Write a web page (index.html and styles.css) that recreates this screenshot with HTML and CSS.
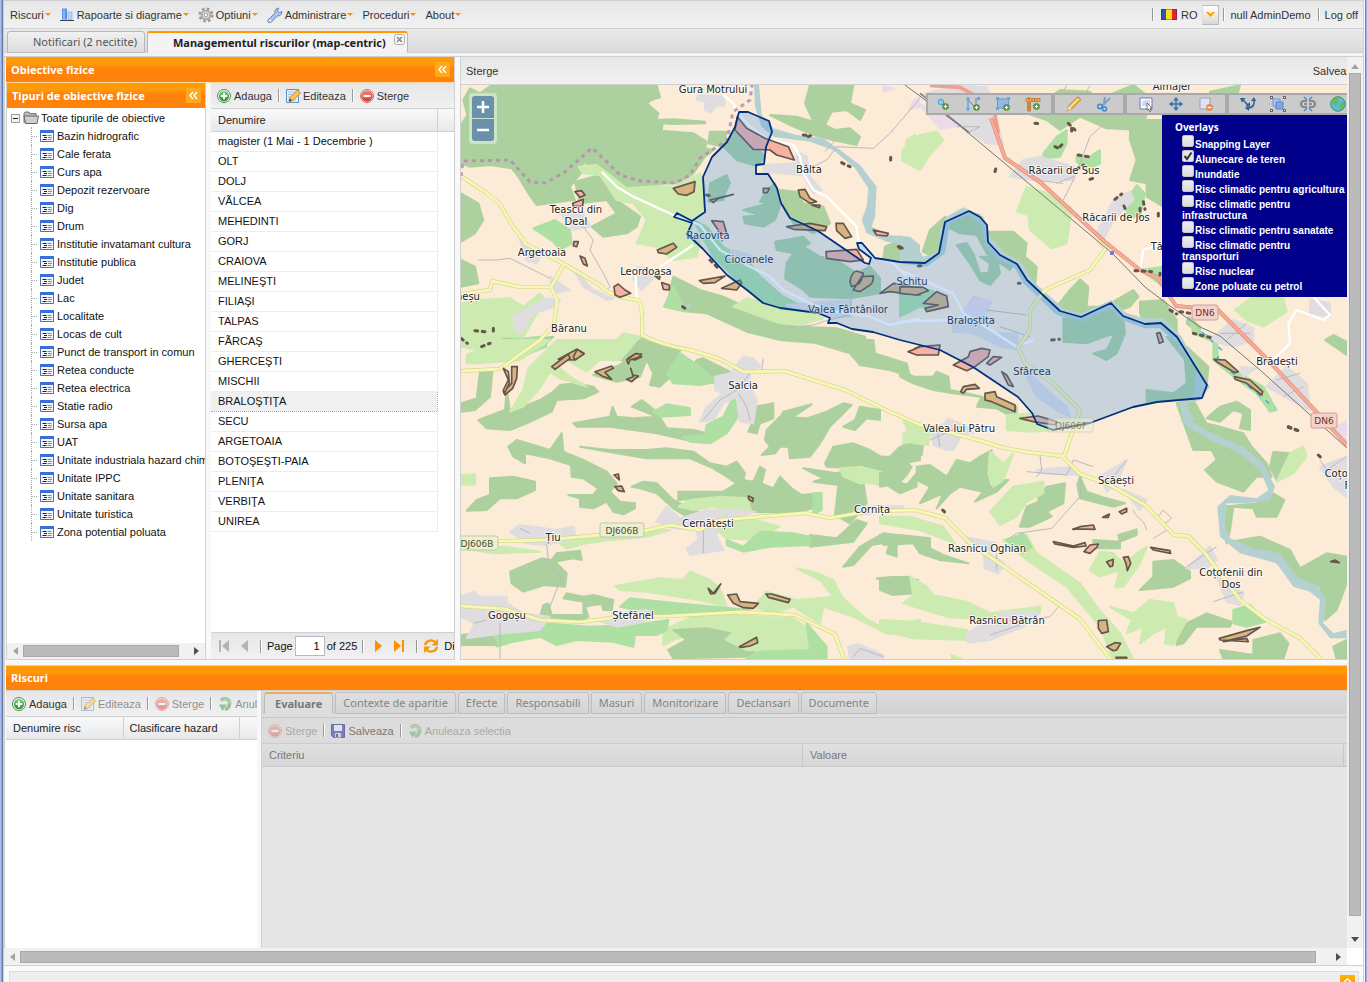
FILE: index.html
```html
<!DOCTYPE html>
<html lang="ro">
<head>
<meta charset="utf-8">
<title>Managementul riscurilor</title>
<link rel="stylesheet" href="styles.css">
</head>
<body>
<svg class="defs" aria-hidden="true">
  <defs>
    <linearGradient id="gGreen" x2="0" y2="1"><stop stop-color="#8fd08a"/><stop offset="1" stop-color="#2c8a2a"/></linearGradient>
    <linearGradient id="gRed" x2="0" y2="1"><stop stop-color="#f0857a"/><stop offset="1" stop-color="#cf3a30"/></linearGradient>
    <linearGradient id="gOr" x2="0" y2="1"><stop stop-color="#ffb400"/><stop offset="1" stop-color="#ff8a00"/></linearGradient>
    <symbol id="add" viewBox="0 0 16 16"><circle cx="8" cy="8" r="6.500" fill="#fff" stroke="#3f8f3b"/><circle cx="8" cy="8" r="5.200" fill="url(#gGreen)"/><path d="M8 4.800v6.400M4.800 8h6.400" stroke="#fff" stroke-width="2"/></symbol>
    <symbol id="del" viewBox="0 0 16 16"><circle cx="8" cy="8" r="6.500" fill="#fff" stroke="#d9685f"/><circle cx="8" cy="8" r="5.800" fill="url(#gRed)"/><path d="M4.500 8h7" stroke="#fff" stroke-width="2.200"/></symbol>
    <symbol id="edit" viewBox="0 0 16 16"><path d="M1.500 1.500h12v13h-12z" fill="#e4effc" stroke="#5f8fc6"/><path d="M3 4h7M3 6.500h5M3 9h3M3 12h8" stroke="#9fc0e6"/><path d="M4 13.500l1-4 7.500-7.500 3 3-7.500 7.500z" fill="#fbc650" stroke="#b5762a" stroke-width=".8"/><path d="M4 13.500l1-3 2 2z" fill="#44382c"/></symbol>
    <symbol id="undo" viewBox="0 0 16 16"><path d="M4 4.500c4-3.500 9-1 8.500 3.500-.4 3-2.500 5-4.500 5.500" fill="none" stroke="#3f9a4c" stroke-width="3.500"/><path d="M2 8.500h8L5.500 15z" fill="#3f9a4c"/><path d="M4.500 4.500c4-3 8-.5 8 3" fill="none" stroke="#7cc47c" stroke-width="1.500"/></symbol>
    <symbol id="save" viewBox="0 0 16 16"><path d="M1.500 1.500h13v13h-11l-2-2z" fill="#5257b5" stroke="#3c3f94"/><path d="M4 2h8v6H4z" fill="#dfe6f6"/><path d="M5 10h6v4.500H5z" fill="#c9cbd4"/><path d="M6 11h2v3H6z" fill="#44468c"/></symbol>
    <symbol id="leaf" viewBox="0 0 14 14"><path d="M.5 1.500h13v11H.5z" fill="#f4f6f9" stroke="#4f70ae"/><path d="M0 1h14v3H0z" fill="#3a6fd8"/><path d="M2.500 6.500h4M4 8.500h3M2.500 10.500h4" stroke="#222"/><path d="M7.500 6.500h4M8 8.500h4M7.500 10.500h4" stroke="#888"/></symbol>
    <symbol id="dbl" viewBox="0 0 15 15"><rect width="15" height="15" rx="1" fill="#ffa81a"/><path d="M7 4L4 7.500 7 11M11 4L8 7.500 11 11" fill="none" stroke="#fff" stroke-width="1.500"/></symbol>
    <symbol id="plusb" viewBox="0 0 8 8"><circle cx="4" cy="4" r="3.500" fill="#5a9c35" stroke="#3c7a20" stroke-width=".6"/><path d="M4 2v4M2 4h4" stroke="#fff" stroke-width="1.200"/></symbol>
  </defs>
</svg>

<div class="app">
  <nav class="topbar">
    <button class="menu">Riscuri<i class="caret"></i></button>
    <button class="menu"><svg width="15" height="15" viewBox="0 0 15 15"><path d="M2 1.500h5v11H2z" fill="#5b8fe6"/><path d="M3 2.500h2v10H3z" fill="#8db4f2"/><path d="M8 5h4v7.500H8z" fill="#b9d2f8" stroke="#7fa6e4" stroke-width=".6"/><path d="M0 13.500h14" stroke="#345"/></svg>Rapoarte si diagrame<i class="caret"></i></button>
    <button class="menu"><svg width="16" height="16" viewBox="0 0 16 16"><circle cx="8" cy="8" r="6.300" fill="none" stroke="#9a9a9a" stroke-width="2.500" stroke-dasharray="2.600 2.350"/><circle cx="8" cy="8" r="4.300" fill="#e4e4e4" stroke="#aaa" stroke-width="2"/><circle cx="8" cy="8" r="1.800" fill="#fafafa" stroke="#999"/></svg>Optiuni<i class="caret"></i></button>
    <button class="menu"><svg width="16" height="16" viewBox="0 0 16 16"><path d="M1 13l7-7c-.5-2.500.5-4.500 3.500-5l-1 3 2 1.500 2.500-1c0 3-2 4.800-4.500 4.300l-6.500 6.700c-2 1-4-.5-3-2.500z" fill="#a9c6ee" stroke="#5b7fb5" stroke-width=".9"/><circle cx="3" cy="13.500" r=".9" fill="#fff"/></svg>Administrare<i class="caret"></i></button>
    <button class="menu">Proceduri<i class="caret"></i></button>
    <button class="menu">About<i class="caret"></i></button>
    <span class="grow"></span>
    <span class="sep"></span>
    <svg class="flag" width="16" height="11" viewBox="0 0 16 11"><path d="M0 0h6v11H0z" fill="#2c52b8"/><path d="M5 0h6v11H5z" fill="#f8e017"/><path d="M11 0h5v11h-5z" fill="#e8202c"/><path d="M.5.500h15v10H.5z" fill="none" stroke="#1a2a6c" stroke-opacity=".4"/></svg>
    <span>RO</span>
    <button class="drop" aria-label="Limba"><svg width="9" height="7" viewBox="0 0 9 7"><path d="M0 1h2.500l2 2 2-2H9L4.500 6z" fill="#f90"/></svg></button>
    <span class="sep"></span>
    <a href="#" class="user">null AdminDemo</a>
    <span class="sep"></span>
    <a href="#" class="user">Log off</a>
  </nav>

  <div class="tabs" role="tablist">
    <button class="tab" role="tab">Notificari (2 necitite)</button>
    <button class="tab on" role="tab">Managementul riscurilor (map-centric)<svg class="close" width="11" height="11" viewBox="0 0 11 11"><rect x=".5" y=".5" width="10" height="10" rx="2" fill="#f6f6f6" stroke="#b0b0b0"/><path d="M3 3l5 5M8 3l-5 5" stroke="#888" stroke-width="1.500"/></svg></button>
  </div>

  <div class="scroller">
    <main class="view">
      <div class="upper">
        <section class="objects">
          <h2 class="bar main">Obiective fizice<button aria-label="Restrange"><svg width="15" height="15"><use href="#dbl"/></svg></button></h2>
          <div class="pair">
            <div class="tree">
              <h3 class="bar">Tipuri de obiective fizice<button aria-label="Restrange"><svg width="15" height="15"><use href="#dbl"/></svg></button></h3>
              <div class="treebody">
                <div class="root"><svg width="9" height="9" viewBox="0 0 9 9"><path d="M.5.5h8v8h-8z" fill="#f4f4f4" stroke="#999"/><path d="M2 4.500h5" stroke="#222"/></svg><svg width="16" height="14" viewBox="0 0 16 14"><path d="M1 12V2.500L2 1h4l1 1.500h6V5" fill="#bbb" stroke="#777"/><path d="M2.500 12.500L1 5h14.500l-1.500 7.500z" fill="#cfcfcf" stroke="#666"/></svg>Toate tipurile de obiective</div>
                <ul>
                  <li><svg width="14" height="14"><use href="#leaf"/></svg>Bazin hidrografic</li>
                  <li><svg width="14" height="14"><use href="#leaf"/></svg>Cale ferata</li>
                  <li><svg width="14" height="14"><use href="#leaf"/></svg>Curs apa</li>
                  <li><svg width="14" height="14"><use href="#leaf"/></svg>Depozit rezervoare</li>
                  <li><svg width="14" height="14"><use href="#leaf"/></svg>Dig</li>
                  <li><svg width="14" height="14"><use href="#leaf"/></svg>Drum</li>
                  <li><svg width="14" height="14"><use href="#leaf"/></svg>Institutie invatamant cultura</li>
                  <li><svg width="14" height="14"><use href="#leaf"/></svg>Institutie publica</li>
                  <li><svg width="14" height="14"><use href="#leaf"/></svg>Judet</li>
                  <li><svg width="14" height="14"><use href="#leaf"/></svg>Lac</li>
                  <li><svg width="14" height="14"><use href="#leaf"/></svg>Localitate</li>
                  <li><svg width="14" height="14"><use href="#leaf"/></svg>Locas de cult</li>
                  <li><svg width="14" height="14"><use href="#leaf"/></svg>Punct de transport in comun</li>
                  <li><svg width="14" height="14"><use href="#leaf"/></svg>Retea conducte</li>
                  <li><svg width="14" height="14"><use href="#leaf"/></svg>Retea electrica</li>
                  <li><svg width="14" height="14"><use href="#leaf"/></svg>Statie radio</li>
                  <li><svg width="14" height="14"><use href="#leaf"/></svg>Sursa apa</li>
                  <li><svg width="14" height="14"><use href="#leaf"/></svg>UAT</li>
                  <li><svg width="14" height="14"><use href="#leaf"/></svg>Unitate industriala hazard chimic</li>
                  <li><svg width="14" height="14"><use href="#leaf"/></svg>Unitate IPPC</li>
                  <li><svg width="14" height="14"><use href="#leaf"/></svg>Unitate sanitara</li>
                  <li><svg width="14" height="14"><use href="#leaf"/></svg>Unitate turistica</li>
                  <li><svg width="14" height="14"><use href="#leaf"/></svg>Zona potential poluata</li>
                </ul>
              </div>
              <div class="hscroll small"><svg width="5" height="8" viewBox="0 0 5 8"><path d="M5 0v8L0 4z" fill="#a3a3a3"/></svg><span class="thumb"></span><svg width="5" height="8" viewBox="0 0 5 8"><path d="M0 0v8l5-4z" fill="#505050"/></svg></div>
            </div>
            <div class="list">
              <div class="tools"><button><svg width="16" height="16"><use href="#add"/></svg>Adauga</button><span class="sep"></span><button><svg width="16" height="16"><use href="#edit"/></svg>Editeaza</button><span class="sep"></span><button><svg width="16" height="16"><use href="#del"/></svg>Sterge</button></div>
              <div class="gridbox">
                <table class="names">
                  <thead><tr><th>Denumire</th><th class="rest"></th></tr></thead>
                  <tbody>
                    <tr><td>magister (1 Mai - 1 Decembrie )</td></tr>
                    <tr><td>OLT</td></tr><tr><td>DOLJ</td></tr><tr><td>VÃLCEA</td></tr><tr><td>MEHEDINTI</td></tr>
                    <tr><td>GORJ</td></tr><tr><td>CRAIOVA</td></tr><tr><td>MELINEŞTI</td></tr><tr><td>FILIAŞI</td></tr>
                    <tr><td>TALPAS</td></tr><tr><td>FÃRCAŞ</td></tr><tr><td>GHERCEŞTI</td></tr><tr><td>MISCHII</td></tr>
                    <tr class="sel"><td>BRALOŞTIŢA</td></tr><tr><td>SECU</td></tr><tr><td>ARGETOAIA</td></tr>
                    <tr><td>BOTOŞEŞTI-PAIA</td></tr><tr><td>PLENIŢA</td></tr><tr><td>VERBIŢA</td></tr><tr><td>UNIREA</td></tr>
                  </tbody>
                </table>
              </div>
              <div class="pager">
                <button aria-label="Prima"><svg width="12" height="12" viewBox="0 0 12 12"><path d="M1 0h2v12H1zM11 0v12L4 6z" fill="#b4b4b4"/></svg></button>
                <button aria-label="Inapoi"><svg width="8" height="12" viewBox="0 0 8 12"><path d="M7 0v12L0 6z" fill="#b4b4b4"/></svg></button>
                <span class="sep"></span>
                <label for="page">Page</label><input id="page" value="1"><span class="of">of 225</span>
                <span class="sep"></span>
                <button aria-label="Inainte"><svg width="8" height="12" viewBox="0 0 8 12"><path d="M1 0v12l7-6z" fill="#fa9200"/></svg></button>
                <button aria-label="Ultima"><svg width="12" height="12" viewBox="0 0 12 12"><path d="M9 0h2v12H9zM1 0v12l7-6z" fill="#fa9200"/></svg></button>
                <span class="sep"></span>
                <button aria-label="Reincarca"><svg width="16" height="14" viewBox="0 0 16 14"><path d="M2 6c1-5 8-6 10.500-2.500M14 8c-1 5-8 6-10.500 2.500" fill="none" stroke="#f59a0c" stroke-width="2.400"/><path d="M15 0v6.500H8.500zM1 14V7.500h6.500z" fill="#f59a0c"/></svg></button>
                <span class="info">Displaying</span>
              </div>
            </div>
          </div>
        </section>

        <section class="mapbox">
          <div class="tools maptools"><button>Sterge</button><button class="savebtn">Salveaza</button></div>
          <div class="map">
            <svg class="canvas" viewBox="461 85 886 574" preserveAspectRatio="xMinYMin slice">
              <rect x="461" y="85" width="1000" height="700" fill="#fbebd7"/>
              <!-- woods, fields, built-up areas -->
              <g transform="translate(460 60) scale(.33333)">
                <path class="f" d="M95 75H590L600 112 575 120 560 130 595 160 590 180 640 178 735 185 735 190 640 192 608 190 605 212 700 220 740 245 735 265 760 270 735 290 700 340 660 368 600 372 560 395 510 400 470 370 430 345 370 305 362 340 330 380 345 420 300 425 230 435 205 400 175 350 155 325 90 315 30 320 3 310 3 195 22 165 10 120 30 85 60 100z"/>
                <path class="f" d="M345 365L420 345 470 420 540 470 530 500 500 520 430 530 395 500 470 460 440 420 360 430zM3 400L55 430 70 480 45 520 3 545zM3 600L45 620 55 670 3 680zM750 215L800 215 790 260 745 250z"/>
                <path class="f" d="M1050 75L1180 75 1170 130 1215 150 1200 180 1160 150 1115 155 1095 195 1125 210 1170 205 1200 230 1190 255 1120 240 1060 225 1000 200 930 165 1010 170 1060 185 1035 130z"/>
                <path class="f" d="M790 260L825 215 880 250 915 290 890 318 830 300zM750 370L800 345 810 370 795 400 790 420 745 425zM850 470L900 465 850 450 925 430 900 425 920 390 945 370 960 440 945 480 910 500 855 490zM945 545L1030 530 1050 550 1030 560 1080 590 1130 600 1190 640 1230 620 1260 655 1260 700 1170 715 1050 710 1030 690 975 655 980 610 1000 580 950 570z"/>
                <path class="f" d="M960 390L1010 395 1030 430 1090 440 1110 490 1060 520 1000 490 975 450zM1275 560L1310 545 1350 570 1350 600 1270 595zM640 650L720 690 790 710 920 770 1010 800 1130 805 1215 830 1220 880 1150 850 1080 850 960 840 860 815 740 760 690 755 620 740zM490 880L545 835 620 870 650 900 460 900zM135 830L210 840 280 830 250 860 120 880 70 870z"/>
                <path class="l" d="M355 320L410 315 450 345 500 385 600 378 640 380 720 340 735 380 735 450 700 480 690 520 720 545 710 590 640 600 590 560 530 550 560 480 520 430 470 420 420 345 370 340zM1340 240L1365 225 1380 235V330L1330 300zM3 730L60 720 150 715 190 740 240 700 255 720 190 830 130 830 60 870 3 860zM820 740L860 715 960 735 1050 755 1090 775 1020 795 960 790zM400 900L470 840 490 820 540 830 480 900z"/>
                <path class="o" d="M220 505L285 480 330 510 335 550 300 570 280 545zM700 480L740 500 790 560 870 610 900 650 970 710 1030 740 960 740 900 720 830 660 760 590zM150 840L240 830 260 860 160 900 130 880zM640 680L680 755 612 740z"/>
                <path class="r" d="M715 105L790 110 795 135 765 140 755 157 735 150 735 125 710 120zM910 315L1010 310 1010 275 1040 290 1050 350 1085 390 1060 400 1030 345 910 335zM525 620L560 625 580 655 545 690 520 660zM160 770L260 715 300 720 285 740 220 760 185 820 165 810zM270 650L330 690 280 700zM300 460L370 460 390 500 340 510zM820 570L880 590 870 610 800 590zM180 540L245 580 230 610 200 600zM980 735L1170 720 1175 770 1100 770zM335 620L400 690 460 715 440 720 370 680z"/>
                <path class="m" d="M1265 75L1310 85 1270 100zM1365 115L1380 110V145L1345 150 1355 125z"/>
                <path class="w" d="M882 75H897L902 130 905 165 940 205 1010 225 1090 235 1140 270 1200 315 1250 380 1245 470 1235 500 1290 525 1350 530 1380 555V605L1350 595 1345 555 1280 545 1220 520 1205 480 1220 440 1225 385 1185 325 1120 270 1050 245 940 230 905 200 885 140z"/>
                <path class="w" d="M675 735L690 730 690 742 675 745z"/>
              </g>
              <g transform="translate(460 340) scale(.33333)">
                <path class="f" d="M400 105L480 75 530 30 570 5 660 30 650 75 680 100 710 60 730 55 820 100 780 130 720 125 690 85 620 120 600 140 570 135 580 100 560 60 540 110 470 125zM55 240L135 210 140 150 150 215 240 180 280 155 300 135 350 130 400 140 415 155 370 175 290 180 275 215 200 250 150 270 80 265zM60 95L97 95 90 170 45 210 3 215V190L50 175zM340 250L450 230 458 200 470 230 520 235 590 230 515 200 545 180 590 215 620 265 700 270 740 280 680 300 590 280 450 260 350 260z"/>
                <path class="f" d="M145 320L170 300 270 330 305 280 310 335 370 360 440 395 470 430 450 455 480 485 525 490 525 505 490 523 460 515 440 485 400 505 360 500 360 475 325 465 400 465 415 445 370 415 335 410 333 375 270 355 195 340 195 370 160 350zM90 415L160 410 225 425 225 450 170 475 120 475 80 510 20 512 50 480 90 465zM360 320L450 330 560 330 620 325 700 335 750 370 800 380 830 365 855 400 850 420 880 425 900 380 915 390 905 430 940 445 960 410 995 445 1025 465 1080 460 1075 500 1000 520 875 515 870 475 780 470 655 480 655 455 790 455 830 430 800 410 760 385 690 355 560 355 470 340z"/>
                <path class="f" d="M515 440L550 425 590 430 640 480 700 510 735 525 680 530 640 505 590 460 540 445zM1060 0H1240L1245 40 1340 70 1350 110 1290 90 1200 75 1170 40 1070 10zM885 200L940 190 940 235 900 250 890 280 865 275 880 240zM920 270L960 230 1040 235 1100 215 1150 190 1175 195 1110 260 1080 310 1050 350 990 355 985 320 960 320 945 340 905 345 930 320 915 300zM955 240L970 215 1055 193 1000 230zM1150 260L1185 240 1200 200 1260 210 1260 240 1220 235 1185 270zM1095 370L1120 320 1180 310 1230 330 1280 360 1320 320 1380 310V360L1310 375 1280 410 1340 435 1370 400V440L1320 460 1280 435 1210 425 1220 490 1170 550 1125 525 1135 435 1060 425 1090 415 1030 385 1130 400 1180 385 1100 380z"/>
                <path class="f" d="M150 695L245 655 275 660 290 640 360 632 365 660 340 655 285 665 320 700 315 740 250 735 240 740 190 755 155 730zM240 830L250 795 265 790 275 825 370 825 370 785 310 775 320 760 370 770 400 765 460 780 455 810 430 810 425 792 400 795 375 800 385 830 370 840zM640 870L740 865 810 880 800 905 850 920 910 920 860 950 640 955 625 930 680 900zM1150 680L1200 620 1270 580 1350 590 1375 600 1310 605 1310 650 1280 640 1290 605 1235 615 1180 675zM1250 715L1310 710 1375 720 1350 760 1265 750 1280 730zM1050 585L1130 595 1190 540 1220 550 1180 605 1050 620z"/>
                <path class="l" d="M20 45L120 0H270L180 60 60 70 20 70zM205 85L290 0 480 0 440 40 380 95 320 60 290 75 330 110 380 140 300 115 270 95 235 150 190 200 150 215 190 150zM655 500L690 480 780 470 860 475 875 515 810 520 760 500 700 510zM750 545L870 535 960 560 920 580 890 600 800 595 770 570zM3 405L45 403V433L3 435zM1330 280L1380 265V310L1330 310zM1140 385L1200 380 1280 400 1280 430 1200 430 1150 410zM300 610L420 580 630 570 560 590 450 600 380 610 320 625zM3 625L130 620 240 635 100 640zM465 738L600 715 670 720 690 695 750 720 780 745 800 800 720 780 560 755 480 750zM880 800L920 755 1010 780 1120 770 1080 720 1010 685 1060 695 1120 720 1145 770 1210 830 1260 860 1380 840V890L1280 880 1180 830 1090 800 1080 850 1000 800 940 820zM610 870L720 820 1000 835 1050 870 1090 940 860 930 800 900 740 870 640 900 610 915z"/>
                <path class="o" d="M580 215L620 193 690 205 690 225 600 230zM620 100L660 40 720 80 770 125 720 135 640 130zM670 290L735 285 740 255 790 230 820 170 840 170 840 220 800 280 750 310 690 305zM800 600L850 620 900 575 1000 580 1050 590 1050 615 930 620 850 635 800 615zM1060 460L1085 460 1085 510 1060 525zM480 800L510 775 650 790 870 810 800 820 600 825zM100 870L180 880 250 850 390 860 520 855 625 840 620 870 590 885 525 885 520 920 460 905 350 900 290 915 240 890 160 905 110 920zM1040 850L1100 920 1100 955 860 955 900 935 1050 930z"/>
                <path class="f" d="M640 870L740 865 810 880 780 905 730 925 640 955 625 930 680 900zM3 885L90 875 110 915 3 915z"/>
                <path class="r" d="M765 110L810 100 850 50 880 55 900 80 870 95 870 140 890 180 880 250 840 245 835 210 830 170 790 190 760 240 720 245 740 200 790 160 765 150zM150 575L180 555 290 570 340 560 350 595 260 615 200 610zM590 545L620 500 660 535 740 510 885 515 770 545 770 590 790 630 690 645 680 625 715 600 710 570 640 565zM1190 500L1330 498 1330 508 1200 525zM3 770L40 755 60 770 140 770 140 790 190 820 270 830 240 870 130 880 20 895 45 850 3 830zM410 840L510 815 560 810 590 830 530 850 470 860zM1165 920L1195 912 1270 945 1270 957 1170 957z"/>
              </g>
              <g transform="translate(900 120) scale(.33333)">
                <path class="f" d="M690 0H790V260L740 230 740 190 690 180 710 120 690 60zM68 395L90 330 135 290 130 400 90 405zM265 335L340 335 380 370 375 410 410 440 405 510 350 440 300 400 265 370zM470 560L510 510 540 478 565 500 560 560 600 560 640 545 700 510 715 530 690 560 660 570 700 600 640 575 545 595 480 575zM720 545L790 540 830 600 830 640 780 610 735 611 720 580zM865 590L900 620 900 640 860 610zM860 680L925 740 920 800 880 760zM205 275L180 300 240 285zM920 895L960 860 1010 845 1050 870 1050 930 1020 925 1030 880 1000 870 960 905zM1275 660L1300 645 1340 665V705z"/>
                <path class="f" d="M0 745L40 770 100 770 110 755 145 770 150 810 200 820 245 830 230 860 290 865 350 900 350 860 240 830 160 820 100 810 40 790 0 770zM140 305L200 275 240 295 260 370 340 435 330 450 260 400 230 345 180 340 150 325z"/>
                <path class="f" d="M170 375L200 370 220 400 240 460 265 460 270 430 240 410 290 410 300 460 270 495 240 480 210 430zM490 595L545 600 640 560 670 600 675 640 650 700 620 720 580 700 620 690 645 640 600 655 560 670 490 665zM740 810L820 820 860 790 855 720 800 650 830 660 885 745 880 830 740 845zM830 850L880 840 930 930 970 990 880 990z"/>
                <path class="l" d="M8 90L60 45 110 35 130 60 85 110 60 150 5 120zM380 200L430 215 515 265 500 370 455 385 390 330 385 285 350 275zM1005 570L1060 530 1150 535 1160 575 1090 620 1040 600zM320 885L400 880 420 910 470 930 390 935 320 930z"/>
                <path class="o" d="M430 100L470 50 500 30 500 70 480 110 430 115zM530 105L570 110 600 90 600 130 560 150 530 125zM680 240L710 195 735 220 720 290 680 290zM720 450L790 440 790 500 750 470zM0 520L60 500 130 525 140 560 60 560 0 590zM870 600L900 640 950 655 955 720 1000 750 1090 800 1130 870 1110 875 1070 820 1000 770 940 720 940 665 880 640z"/>
                <path class="r" d="M155 0H290L310 75 260 70zM330 170L370 120 420 110 520 140 520 180 400 180zM590 340L640 240 690 215 700 240 640 300 610 360zM190 580L220 530 275 545 240 600zM155 600L210 590 280 640 350 640 360 690 300 680 220 640 160 635zM380 770L400 770 430 800 500 860 510 890 470 870 410 830zM930 660L1000 600 1060 625 1060 660 1000 680zM1100 800L1160 740 1220 790 1230 870 1190 850zM1230 540L1290 550 1290 590 1230 580zM1020 740L1070 745 1030 770zM115 930L145 895 200 920 220 940 160 940 150 990 120 970z"/>
                <path class="m" d="M1300 930L1340 905V960zM190 565L235 530 270 540 265 580 215 605z"/>
                <path class="w" d="M0 345L40 365 70 410 120 395 120 330 140 290 190 262 250 290 270 350 310 395 365 425 395 480 490 565 545 580 635 540 680 580 735 595 790 595 845 650 915 780 930 800 900 840 860 850 870 880 900 920 970 945 1020 990H970L900 950 850 910 840 850 880 830 890 750 830 670 780 625 735 625 665 600 630 565 545 605 470 585 370 490 345 445 290 415 255 375 245 315 205 285 150 310 135 400 80 440 0 430z"/>
                <path d="M905 635l60 55 -15 30 55 45 120 100" fill="none" stroke="#3aa5ea" stroke-width="4" stroke-dasharray="14 20"/>
              </g>
              <g transform="translate(880 420) scale(.33333)">
                <path class="f" d="M70 75L130 70 125 105 60 105zM0 110L60 110 95 140 80 165 55 190 0 200V160L40 150zM110 140L150 135 200 170 230 120 270 130 300 110 335 90 320 160 330 200 370 180 385 180 350 215 285 245 310 215 240 200 210 220 170 265 190 220 120 250 150 200 110 180zM475 235L500 200 555 190 550 250 480 285zM420 320L440 260 475 245 515 290 450 320zM600 170L620 215 680 235 735 250 700 260 600 235 592 195z"/>
                <path class="f" d="M930 0L1000 15 1090 40 1115 80 1160 130 1175 170 1130 170 1090 215 1010 185 975 150 1010 120 980 60 940 40zM1180 95L1230 100 1230 140 1190 180 1170 140zM1130 250L1180 220 1213 240 1190 290 1130 290 1120 265 1060 260 1050 330 1040 370 1025 320 1030 260zM1050 365L1140 350 1230 390 1260 445 1340 400 1400 410V490L1370 570 1335 600 1320 500 1240 470 1180 420 1090 395z"/>
                <path class="f" d="M820 425L880 420 930 455 930 475 880 500 780 510 820 470zM715 345L770 328 770 345 720 365zM640 360L720 365 720 385 640 385zM900 620L980 580 1055 605 1050 620 950 620 910 670 890 675zM1120 660L1200 640 1225 670 1210 717H1030L1020 690 1120 705zM0 345L60 345 150 355 150 385 190 405 265 430 180 420 120 400 100 370 10 375zM0 475L90 470 100 520 40 525 0 510zM1360 680L1400 660V717H1370z"/>
                <path class="l" d="M70 0L150 20 145 75 100 70zM325 160L330 95 370 130 400 100 370 180 340 200zM330 275L400 200 490 185 490 220 440 245 410 290 360 315zM0 290L90 290 190 320 225 370 120 330 0 310zM1190 185L1230 100 1270 80 1280 110 1240 160zM370 360L440 345 470 400 600 490 650 560 720 640 760 717H700L660 620 560 500 440 420zM630 450L660 395 700 400 730 430 800 380 780 430 730 500 705 500 720 450 660 470zM90 470L140 500 160 525 260 545 330 580 480 560 480 575 330 600 200 590 70 550 100 525zM0 600L100 605 260 630 270 660 100 655 0 630zM690 560L760 580 810 540 880 550 890 590 920 600 880 675 855 670 860 620 820 640 780 670 790 620 740 640 755 600zM215 705L245 717H215z"/>
                <path class="o" d="M380 360L430 340 455 380 430 400zM1060 570L1110 555 1155 605 1100 620 1060 610z"/>
                <path class="r" d="M150 20L230 10 250 35 220 90 200 90 160 75zM470 150L580 140 600 165 480 160zM660 170L740 120 710 190 680 215zM310 390L375 430 355 460 315 445zM250 350L350 370 330 390 260 370zM920 445L990 380 1010 420 980 445zM1010 470L1090 520 1080 555 1040 545zM260 640L380 575 480 580 430 620 330 660 265 668zM730 210L800 240 780 270zM1320 140L1400 110V230L1360 200z"/>
                <path class="m" d="M1365 20L1400 0V75z"/>
                <path class="w" d="M900 0L930 0 985 35 1020 50 1090 80 1150 130 1185 200 1170 240 1100 250 1040 250 1035 320 1050 355 1120 385 1200 400 1250 470 1310 495 1340 540 1330 610 1360 640 1400 630V655L1350 655 1315 610 1320 540 1290 515 1240 500 1190 430 1080 400 1020 350 1012 260 1050 225 1130 235 1165 210 1140 150 1080 100 1000 65 940 30z"/>
              </g>
              <g transform="translate(920 0) scale(.33333)">
                <path class="f" d="M320 340L420 270 510 275 530 300 640 255 700 300 660 390 560 385 480 350 420 390 380 360zM870 275L960 256 950 290 870 290z"/>
                <path class="r" d="M0 285L110 256 200 262 230 330 220 390 80 360z"/>
                <path class="m" d="M0 310L60 330 120 380 60 390 0 320z"/>
                <path d="M30 256L120 262 190 300 225 345 235 400" fill="none" stroke="#f0a08c" stroke-width="11"/>
                <path class="rail" d="M0 280L150 400"/>
                <path class="g" d="M470 330L510 256M390 330L440 256"/>
              </g>

              <!-- minor roads -->
              <g transform="translate(460 60) scale(.33333)">
                <path class="g" d="M55 600H110L150 595 180 610 270 655M370 500L400 540 390 570 430 640 450 680 440 690M1380 115L1290 220 1240 265 1130 260 1100 300 1050 325M1125 240L1095 275M980 803L1060 795 1105 780 1170 765 1175 690 1230 610"/>
                <path class="wh" d="M790 105L820 130 830 155 870 200 920 235 1000 255 1020 290 1030 340 1060 390 1100 410 1190 500 1197 560 1240 590 1300 610 1340 650M425 335L470 380 520 410 640 465 720 495 780 570 860 615 930 650 970 690 1040 725 1100 750 1230 770 1290 795 1380 775M525 620L530 720M600 620L700 555"/>
              </g>
              <g transform="translate(460 340) scale(.33333)">
                <path class="g" d="M260 610L265 660 280 690 305 710 270 800 270 830M120 850V957M730 570V640M180 565L210 580M730 240L780 180 830 150 870 100M910 55L905 90M835 160L860 200 870 240M40 850L80 840M1180 950L1200 925 1270 950"/>
              </g>
              <g transform="translate(900 120) scale(.33333)">
                <path class="g" d="M625 0L570 50 555 90 520 180 490 240M170 20L240 20 200 40M470 190L520 170M260 570L380 585M300 620L390 650M400 180L490 190M960 640L1050 640M980 660L1040 610M1130 780L1200 760M1150 830L1210 800"/>
                <path class="wh" d="M0 450L90 490 160 520 190 580 280 635 350 680 400 660M0 605L150 600 200 590M1240 530L1290 585 1270 600 1190 570 1165 610 1170 670 1120 720M720 450L730 390 790 370"/>
              </g>
              <g transform="translate(880 420) scale(.33333)">
                <path class="g" d="M440 155L560 165 580 120 640 140M480 105L485 150 470 170M605 170L600 230 515 325 410 340 380 360M680 195L740 120M820 355L870 325M830 295L850 270 875 295 855 310M1010 380L920 440M1000 545L1090 515M350 400V450M150 60L240 20M180 80L170 20M540 555L510 590 440 600M330 645L420 615M760 270C770 300 790 290 800 330M1320 120L1340 150 1400 110"/>
              </g>

              <!-- county and national roads -->
              <defs>
                <path id="dj" d="M461 176L485 192 500 204 512 225 526 244 564 264 600 285 Q608 296 638 300 Q643 304 642 335 Q660 345 690 350L720 359 744 372 784 371 845 390 886 410 918 424 955 434 Q980 440 1000 447L1026 452 1062 456 1080 474 1110 485 1145 505 1174 535 1188 536 1205 553 1240 600 1265 619 1300 638 1321 659M564 264L551 287 557 300 554 325 540 340 500 369 461 371M461 294L490 290 492 281 520 287 551 287M461 541L510 541 545 540 600 535 640 532 670 525 700 530 720 520 805 513 830 518 870 511 915 510 945 518 970 543 1080 619 1110 659M461 606L505 609 540 620 580 622 620 617 670 616 740 612 795 615 805 620 835 634 844 659M1064 456L1080 410 1055 385 1025 363 1018 348 1030 330 1030 310 1045 290 1090 270 1106 248 1098 240"/>
                <path id="dn" d="M991 118L1005 158 1040 182 1105 242 1140 270 1158 278 1176 306 1218 310 1270 362 1347 445"/>
              </defs>
              <g class="road"><use href="#dj" class="c1"/><use href="#dj" class="c2"/><use href="#dn" class="p1"/><use href="#dn" class="p2"/></g>
              <path class="rail" d="M905 85L960 126 1112 253 1145 287 1170 306 1200 327 1220 336 1260 370 1347 448"/>
              <path d="M1110 251h4v4h-4z" fill="#7481c8"/>
              <path d="M461 176L463 161 510 160 530 182 545 183 565 172 592 148 605 160 620 175 640 181 675 183 690 175 700 158 727 140 733 112 750 100 752 85" fill="none" stroke="#b98caf" stroke-opacity=".85" stroke-width="3" stroke-dasharray="4 4"/>

              <!-- landslide areas -->
              <g class="slide" transform="translate(460 60) scale(.33333)">
                <path class="pk" d="M832 170L860 205 915 235 985 260 1003 300 950 285 930 270 880 268 825 210zM345 395L365 392 375 405 360 412zM338 430L370 418 368 438 340 440zM342 545L355 545 350 560 340 558zM360 588L375 595 382 618 370 612zM462 680L475 672 495 690 512 700 480 712 465 705zM585 648H600L598 658zM605 668L628 675 628 690 610 688zM755 482L790 485 800 520 785 525zM910 385L928 385 922 398 910 398zM1098 575L1190 568 1210 600 1170 605 1100 595zM1240 510L1285 520 1280 528 1250 525zM1350 875L1380 858V880zM1365 865L1380 862"/>
                <path class="tn" d="M640 385L705 365 702 395 680 406 655 402zM1015 390L1035 388 1050 415 1070 425 1050 430 1020 410zM1055 435L1080 435 1078 443zM980 500L1050 490 1100 500 1095 512 1000 508zM1128 490L1150 490 1175 530 1155 535 1130 512zM592 570L640 550 650 562 620 582 595 578zM718 662L795 648 765 668 730 670zM785 685L840 660 845 670 830 690zM1170 665Q1175 635 1190 633L1210 640Q1205 665 1195 672L1175 680zM1180 690L1205 650 1240 648Q1240 670 1230 675L1200 695zM1260 700L1300 670 1340 675 1380 690V705L1330 700 1290 695zM295 898L350 868 372 880 340 900zM505 895L530 880 545 890 525 900zM750 420L820 403 775 415 760 428z"/>
                <path class="dk" d="M1030 225L1052 227 1040 232M1145 308L1170 320M1292 292V305M1315 560L1332 572M45 812L75 815M3 835L22 850M65 860L90 850M750 600L775 625M740 405L760 410M668 740L675 745M100 805V818"/>
              </g>
              <g class="slide" transform="translate(460 340) scale(.33333)">
                <path class="tn" d="M275 80L325 42 330 55 285 88zM340 50L352 28 372 42 345 60zM405 95L455 78 460 85 435 97 455 118 430 110zM500 60L525 42 545 42 535 52 510 60 505 72zM512 85L518 105 535 108 515 125 500 118 520 110zM155 80L172 80 170 115 158 145 135 165 130 155 155 130zM462 405L475 402 478 420zM465 440L485 438 493 455 475 452zM865 468L880 475 878 485 866 478zM745 745L760 760 782 732 765 760 752 762zM803 765L830 762 840 785 895 790 880 805 850 803 820 790zM918 762L935 762 990 778 985 788 925 772zM838 920L890 892 893 908 870 918 842 922z"/>
                <path class="pk" d="M130 85L145 95 148 130 133 160 130 150 145 120zM1345 35L1378 25V45z"/>
              </g>
              <g class="slide" transform="translate(900 120) scale(.33333)">
                <path class="pk" d="M25 695L60 680 120 675 115 705 50 705zM160 735L205 710 210 695 245 685 270 690 265 710 225 740 200 752zM260 730L280 710 305 712 270 735zM305 755L320 765 340 800 325 795zM360 895L415 888 470 905 465 915 400 905zM770 640L780 638 790 665 778 670z"/>
                <path class="tn" d="M182 815L190 800 225 793 238 805 200 808 190 820zM255 820L285 815 290 830 345 855 345 875 275 845 255 840zM70 550L110 515 140 528 145 560 80 575 75 565 115 555zM0 500L70 502 85 512 50 525 0 520zM942 718L975 720 1015 755 1005 758 950 725zM1003 770L1050 780 1088 815 1085 825 1040 790 1005 778z"/>
                <path class="dk" d="M285 155L290 135M505 10L525 30M480 80L490 70M515 25V45M465 80L475 85M530 148L550 135M535 105L565 110M570 178L588 172M645 238L665 222M672 258L675 265M730 245L735 268M720 265V290M775 280V298M455 660L478 658M55 438L70 437M0 380L15 390M810 570L830 582M840 575L870 580M880 640L940 655M705 452L755 455M780 460V465M405 10L425 12M1165 922L1200 934M355 490H360"/>
              </g>
              <g class="slide" transform="translate(880 420) scale(.33333)">
                <path class="pk" d="M718 275L740 265 740 275 725 282zM668 292L688 282 685 292zM578 328L600 320 640 315 645 328 600 327zM520 365L580 378 615 368 618 378 580 382 525 372zM612 395L630 375 655 372 650 382 630 400zM812 382L870 392 872 400 820 390z"/>
                <path class="tn" d="M680 425L700 418 698 438 690 440zM730 412L745 410 752 430 742 452 738 430zM655 602L680 600 685 635 665 640 655 625zM680 680L705 668 722 670 710 690 700 692zM708 712L740 712 740 718H710zM1018 655L1100 632 1140 622 1100 648 1030 665 1100 655 1105 665 1020 660zM1352 425L1365 420 1378 428z"/>
                <path class="dk" d="M188 270L200 282M1225 20L1260 34M1315 105L1322 112"/>
              </g>

              <path d="M739 112L748 112 769 121 772 132 766 147 764 164 756 165 756 174 768 174 777 188 781 203 790 218 818 231 865 263 869 264 871 258 859 249 857 243 862 243 875 258 900 262 925 263 939 253 945 222 969 211 980 217 987 225 988 242 1000 255 1017 264 1027 280 1060 311 1081 317 1111 303 1123 316 1145 324 1161 323 1177 337 1207 385 1202 398 1157 402 1133 407 1090 423 1053 430 1037 424 1032 413 1018 397 973 367 940 350 900 340 873 332 852 329 837 323 828 323 830 318 818 313 780 308 763 303 747 290 727 275 703 249 687 234 692 223 674 217 677 213 692 221 705 212 703 177 712 157 727 142 735 127z" fill="#328ceb" fill-opacity=".25" stroke="#00307f" stroke-width="1.800" stroke-linejoin="round"/>

              <g class="shield">
                <rect x="455" y="536" width="43" height="14" rx="2"/><text x="477" y="547">DJ606B</text>
                <rect x="600" y="523" width="44" height="14" rx="2"/><text x="622" y="534">DJ606B</text>
                <rect x="1048" y="418" width="45" height="14" rx="2" opacity=".5"/><text x="1071" y="429" opacity=".6">DJ606F</text>
                <rect class="dn" x="1192" y="305" width="26" height="15" rx="2"/><text class="dn" x="1205" y="316">DN6</text>
                <rect class="dn" x="1311" y="413" width="26" height="15" rx="2"/><text class="dn" x="1324" y="424">DN6</text>
              </g>
              <g class="place">
                <text x="713" y="93">Gura Motrului</text><text x="1172" y="90">Almajer</text><text x="809" y="173">Bâlta</text>
                <text x="576" y="213">Teascu din</text><text x="576" y="225">Deal</text><text x="542" y="256">Argetoaia</text>
                <text x="646" y="275">Leordoasa</text><text x="458" y="300">Argineșu</text><text x="569" y="332">Băranu</text>
                <text x="1064" y="174">Răcarii de Sus</text><text x="1116" y="221">Răcarii de Jos</text><text x="1167" y="250">Tălpaș</text>
                <text x="743" y="389">Salcia</text><text x="959" y="432">Valea lui Pătru</text><text x="1277" y="365">Brădești</text>
                <text x="708" y="527">Cernătești</text><text x="872" y="513">Cornița</text><text x="553" y="541">Țiu</text>
                <text x="507" y="619">Gogoșu</text><text x="633" y="619">Ștefănel</text><text x="1116" y="484">Scăești</text>
                <text x="987" y="552">Rasnicu Oghian</text><text x="1007" y="624">Rasnicu Bătrân</text>
                <text x="1231" y="576">Coțofenii din</text><text x="1231" y="588">Dos</text>
                <text x="1347" y="477">Coțofenii</text><text x="1355" y="489">Față</text>
                <g class="in"><text x="708" y="239">Racovița</text><text x="749" y="263">Ciocanele</text><text x="912" y="285">Schitu</text><text x="848" y="313">Valea Fântânilor</text><text x="971" y="324">Braloștița</text><text x="1032" y="375">Sfârcea</text></g>
              </g>
            </svg>

            <div class="zoom"><button aria-label="Mareste"><svg width="14" height="14" viewBox="0 0 14 14"><path d="M7 1v12M1 7h12" stroke="#fff" stroke-width="2.500"/></svg></button><button aria-label="Micsoreaza"><svg width="14" height="14" viewBox="0 0 14 14"><path d="M1 7h12" stroke="#fff" stroke-width="2.500"/></svg></button></div>

            <div class="draw">
              <div class="set first">
                <button aria-label="Punct"><svg viewBox="0 0 16 16"><circle cx="6" cy="6" r="2.800" fill="#8ec9ea" stroke="#4d9bd0"/><use href="#plusb" x="7" y="7" width="7" height="7"/></svg></button>
                <button aria-label="Linie"><svg viewBox="0 0 16 16"><path d="M3 13V4l8 8V2" fill="none" stroke="#6682b8"/><path d="M1.500 1.500h3v3h-3zM1.500 11.500h3v3h-3zM12 1h3v3h-3z" fill="#45b6ea"/><use href="#plusb" x="8" y="8" width="7" height="7"/></svg></button>
                <button aria-label="Poligon"><svg viewBox="0 0 16 16"><path d="M2.500 3h11v9h-11z" fill="#92b9ea" stroke="#6a94d0"/><path d="M1 1h3v3H1zM12 1h3v3h-3zM1 11h3v3H1z" fill="#45b6ea"/><use href="#plusb" x="8" y="8" width="7" height="7"/></svg></button>
                <button aria-label="Masurare"><svg viewBox="0 0 16 16"><path d="M1 2.500h14v3H5.500V15h-3V5.500H1z" fill="#f1b064" stroke="#c5803a"/><path d="M4 1v14M7 3v2M9.500 3v2M12 3v2M3 8h2M3 11h2" stroke="#a8662a" stroke-width=".8"/><use href="#plusb" x="8" y="7" width="7" height="7"/></svg></button>
              </div>
              <div class="set">
                <button aria-label="Editeaza"><svg viewBox="0 0 16 16"><path d="M1 15l1.500-5L11 1.500q1-1 2.500.5t.5 2.500L5.500 13z" fill="#fbc74a" stroke="#b9762a"/><path d="M1 15l1.500-5 3 3z" fill="#f3dfc0"/><path d="M4 11l8-8" stroke="#fff0b0"/></svg></button>
                <button aria-label="Taie"><svg viewBox="0 0 16 16"><path d="M9 1L7.500 10M14 2L6 10" stroke="#7d9ec8" stroke-width="2"/><circle cx="4" cy="10.500" r="2.200" fill="none" stroke="#4187c8" stroke-width="1.500"/><circle cx="8.500" cy="13" r="2" fill="none" stroke="#4187c8" stroke-width="1.500"/></svg></button>
              </div>
              <div class="set">
                <button aria-label="Selecteaza"><svg viewBox="0 0 16 16"><path d="M2 2h12v11H2z" fill="#f8fafe" stroke="#6a7fae"/><path d="M4 10V8q0-4 4-4h4v6z" fill="#cdd8ef"/><path d="M9 7l5 5-2 .3 1 2.700-1.500.5-1-2.500L9 14z" fill="#fff" stroke="#555" stroke-width=".8"/></svg></button>
                <button aria-label="Muta"><svg viewBox="0 0 16 16"><path d="M8 3v10M3 8h10" stroke="#366fa8" stroke-width="1.500"/><path d="M8 1l3 3.500H5zM8 15l3-3.500H5zM1 8l3.500-3v6zM15 8l-3.500-3v6z" fill="#366fa8"/></svg></button>
                <button aria-label="Sterge"><svg viewBox="0 0 16 16"><path d="M2 2h10v11H2z" fill="#dde3ef" stroke="#98a2bd"/><circle cx="11.500" cy="11.500" r="3.500" fill="#e08b5e"/><path d="M9.500 11.500h4" stroke="#fff" stroke-width="1.400"/></svg></button>
              </div>
              <div class="set">
                <button aria-label="Roteste"><svg viewBox="0 0 16 16"><path d="M3 4l6 6M14 4q1 7-5 8" fill="none" stroke="#315f9e" stroke-width="1.600"/><path d="M0 2h5.500L2 6.500zM14 1l2 4h-5zM9 9v6l-4-3zM10 11V6L5.500 10z" fill="#315f9e"/></svg></button>
                <button aria-label="Redimensioneaza"><svg viewBox="0 0 16 16"><path d="M3 3h7v7H3z" fill="#a9c8f2" stroke="#6a96d6"/><path d="M6 6h7v7H6z" fill="#7da9e6" stroke="#5686cc"/><path d="M.5.5h2v2h-2zM13.500.5h2v2h-2zM.5 13.500h2v2h-2zM13.500 13.500h2v2h-2z" fill="#fff" stroke="#333" stroke-width=".8"/></svg></button>
                <button aria-label="Separa"><svg viewBox="0 0 16 16"><path d="M7 5H4Q1 5 1 8t3 3h3M9 5h3q3 0 3 3t-3 3H9M4 8h3M9 8h3" fill="none" stroke="#777" stroke-width="1.600"/><path d="M4 1l3 3M12 1L9 4M4 15l3-3M12 15l-3-3" stroke="#4386cf" stroke-width="1.300"/></svg></button>
                <button aria-label="Harta"><svg viewBox="0 0 16 16"><circle cx="8" cy="8" r="7.300" fill="#62b7e8" stroke="#3d9a4b"/><path d="M3 3q4-3 6-1L7 5l2 2-3 3-4-3zM10 8l4-3 .5 5-3 4-2-2z" fill="#5fbd5b"/></svg></button>
              </div>
            </div>

            <div class="layers">
              <strong>Overlays</strong>
              <label><input type="checkbox">Snapping Layer</label>
              <label><input type="checkbox" checked>Alunecare de teren</label>
              <label><input type="checkbox">Inundatie</label>
              <label class="nowrap"><input type="checkbox">Risc climatic pentru agricultura</label>
              <label><input type="checkbox">Risc climatic pentru infrastructura</label>
              <label><input type="checkbox">Risc climatic pentru sanatate</label>
              <label><input type="checkbox">Risc climatic pentru transporturi</label>
              <label><input type="checkbox">Risc nuclear</label>
              <label><input type="checkbox">Zone poluate cu petrol</label>
            </div>
          </div>
        </section>
      </div>

      <section class="risks">
        <h2 class="bar main">Riscuri</h2>
        <div class="riskrow">
          <div class="risklist">
            <div class="tools"><button><svg width="16" height="16"><use href="#add"/></svg>Adauga</button><span class="sep"></span><button disabled><svg width="16" height="16"><use href="#edit"/></svg>Editeaza</button><span class="sep"></span><button disabled><svg width="16" height="16"><use href="#del"/></svg>Sterge</button><span class="sep"></span><button disabled><svg width="16" height="16"><use href="#undo"/></svg>Anuleaza</button></div>
            <table class="heads"><thead><tr><th class="c110">Denumire risc</th><th class="c116">Clasificare hazard</th><th></th></tr></thead></table>
          </div>
          <div class="detail">
            <div class="subtabs" role="tablist">
              <button class="on" role="tab">Evaluare</button><button role="tab">Contexte de aparitie</button><button role="tab">Efecte</button><button role="tab">Responsabili</button><button role="tab">Masuri</button><button role="tab">Monitorizare</button><button role="tab">Declansari</button><button role="tab">Documente</button>
            </div>
            <div class="tools dim"><button disabled><svg width="16" height="16"><use href="#del"/></svg>Sterge</button><span class="sep"></span><button><svg width="16" height="16"><use href="#save"/></svg>Salveaza</button><span class="sep"></span><button disabled><svg width="16" height="16"><use href="#undo"/></svg>Anuleaza selectia</button></div>
            <table class="heads dimhead"><thead><tr><th>Criteriu</th><th>Valoare</th><th class="end"></th></tr></thead></table>
          </div>
        </div>
      </section>
    </main>
    <div class="vscroll"><svg width="8" height="5" viewBox="0 0 8 5"><path d="M0 5h8L4 0z" fill="#a3a3a3"/></svg><span class="thumb"></span><svg width="8" height="5" viewBox="0 0 8 5"><path d="M0 0h8L4 5z" fill="#505050"/></svg></div>
    <div class="hscroll"><svg width="5" height="8" viewBox="0 0 5 8"><path d="M5 0v8L0 4z" fill="#a3a3a3"/></svg><span class="thumb"></span><svg width="5" height="8" viewBox="0 0 5 8"><path d="M0 0v8l5-4z" fill="#505050"/></svg></div>
    <div class="corner"></div>
  </div>

  <footer class="foot"><button aria-label="Extinde"><svg width="15" height="15" viewBox="0 0 15 15"><rect width="15" height="15" rx="1" fill="url(#gOr)"/><path d="M4 7l3.500-3L11 7M4 11l3.500-3 3.500 3" fill="none" stroke="#fff" stroke-width="1.500"/></svg></button></footer>
</div>
</body>
</html>
```
FILE: styles.css
```css
* { box-sizing: border-box; }
html, body { height: 100%; }
body {
  margin: 0;
  padding: 0 3px;
  overflow: hidden;
  font: 11px/14px "Liberation Sans", Arial, sans-serif;
  color: #333;
  background: linear-gradient(90deg, #a9c0ec 0 1px, #8fa5d8 1px 2px, #6478a8 2px 3px, #fafafa 3px calc(100% - 3px), #fafafa calc(100% - 2px), #6f83b6 calc(100% - 2px) calc(100% - 1px), #9cb4e4 calc(100% - 1px));
}
button { font: inherit; color: inherit; background: none; border: 0; margin: 0; padding: 0; white-space: nowrap; }
a { color: inherit; text-decoration: none; }
svg { display: block; flex: none; }
.defs { position: absolute; width: 0; height: 0; }
.app { display: flex; flex-direction: column; height: 100%; background: #fafafa; border-left: 1px solid #d0d0d0; border-right: 1px solid #d0d0d0; }
.grow { flex: 1; }
.sep { flex: none; width: 1px; height: 13px; background: #999; box-shadow: 1px 0 #fff; }

/* application menu */
.topbar { display: flex; align-items: center; flex: none; height: 29px; padding: 0 5px 0 6px; border-top: 1px solid #d0d0d0; border-bottom: 1px solid #d0d0d0; background: linear-gradient(#e6e6e6, #f1f1f1); }
.menu { display: flex; align-items: center; margin-right: 9px; }
.menu svg { margin-right: 2px; }
.caret { margin-left: 1px; border: 3px solid transparent; border-top-color: #fb9000; border-bottom: 0; }
.flag { margin: 0 4px 0 8px; }
.drop { display: grid; place-items: center; width: 17px; height: 20px; margin: 0 4px 0 5px; border: 1px solid #bbb; border-left-color: #ddd; background: linear-gradient(#fff, #d8d8d8); }
.user { padding: 0 7px 0 6px; }
.user:last-child { padding-right: 0; }

/* document tabs */
.tabs { display: flex; align-items: flex-end; gap: 2px; flex: none; height: 28px; padding: 0 3px 3px; border-bottom: 1px solid #d0d0d0; background: linear-gradient(#eaeaea, #dadada 23px, #d0d0d0 23px, #d0d0d0 24px, #f3f3f3 24px); }
.tab { position: relative; height: 22px; padding: 0 7px 0 25px; font: 11px/14px "Noto Sans", sans-serif; color: #555; border: 1px solid #b8b8b8; border-radius: 3px 3px 0 0; background: linear-gradient(#f0f0f0, #dedede); }
.tab.on { padding: 0 21px 0 25px; color: #222; font-weight: 700; border-top: 2px solid #f90; border-bottom-color: #eee; background: #f3f3f3; }
.close { position: absolute; right: 2px; top: 1px; }

/* scrolled page area */
.scroller { flex: 1; min-height: 0; display: grid; grid-template: minmax(0, 1fr) 17px / minmax(0, 1fr) 16px; border-bottom: 1px solid #d0d0d0; }
.view { display: flex; flex-direction: column; overflow: hidden; border-left: 1px solid #d0d0d0; background: #f8f8f8; padding-left: 1px; }
.upper { display: flex; gap: 5px; height: 603px; flex: none; }
.bar { display: flex; align-items: center; justify-content: space-between; flex: none; height: 25px; margin: 0; padding: 0 4px 0 5px; color: #fff; font: bold 11px/14px "Noto Sans", sans-serif; background: linear-gradient(#ff9c00, #ff980a 30%, #ff820a 45%, #ff820a); }
.objects { display: flex; flex-direction: column; flex: none; width: 449px; border-right: 1px solid #d0d0d0; border-bottom: 1px solid #d0d0d0; }
.objects > .bar { border-bottom: 1px solid #ffd9a0; height: 26px; }
.pair { display: flex; gap: 5px; flex: 1; min-height: 0; }
.tree { display: flex; flex-direction: column; width: 200px; flex: none; overflow: hidden; border-right: 1px solid #d0d0d0; border-left: 1px solid #d0d0d0; background: #fff; color: #111; }
.treebody { flex: 1; padding: 1px 0 0 4px; overflow: hidden; white-space: nowrap; }
.root { display: flex; align-items: center; height: 18px; gap: 3px; }
.root svg + svg { margin-right: -1px; }
.tree ul { list-style: none; margin: 0 0 0 20px; padding: 0; }
.tree li { display: flex; align-items: center; gap: 3px; height: 18px; border-left: 1px dotted #aaa; }
.tree li::before { content: ""; width: 5px; border-top: 1px dotted #aaa; flex: none; }
.list { display: flex; flex-direction: column; flex: 1; min-width: 0; background: #fff; }
.tools { display: flex; align-items: center; flex: none; height: 26px; padding: 0 5px; overflow: hidden; border-bottom: 1px solid #d0d0d0; background: linear-gradient(#e6e6e6, #f1f1f1); }
.tools button { display: flex; align-items: center; gap: 2px; }
.tools .sep { margin: 0 6px; }
.tools button:disabled { opacity: .5; }
.gridbox { flex: 1; overflow: hidden; }
table { border-collapse: collapse; width: 100%; table-layout: fixed; }
th { height: 22px; padding: 0 7px; text-align: left; font-weight: 400; color: #222; border-bottom: 1px solid #d0d0d0; border-right: 1px solid #d0d0d0; background: linear-gradient(#f9f9f9, #e6e8eb); }
.names th.rest { width: 17px; padding: 0; border-right: 0; }
.names td { height: 20px; padding: 0 7px; white-space: nowrap; color: #111; border-bottom: 1px solid #ededed; border-right: 1px solid #ededed; }
.names .sel td { background: #f0f0f0; border: 1px dotted #aaa; border-left: 0; }
.pager { display: flex; align-items: center; flex: none; height: 27px; padding-left: 7px; overflow: hidden; color: #111; border-top: 1px solid #d0d0d0; background: linear-gradient(#e6e6e6, #f1f1f1); }
.pager button { margin-right: 11px; }
.pager input { width: 30px; height: 20px; margin: 0 2px; padding: 0 4px; font: inherit; text-align: right; border: 1px solid #b5b8c8; background: #fff; }
.pager .sep { margin-right: 6px; }
.pager .of { flex: none; white-space: nowrap; }
.pager .of + .sep { margin: 0 11px 0 5px; }
.pager .info { flex: none; margin-left: -6px; }

/* scroll bars */
.hscroll { display: flex; align-items: center; height: 17px; padding: 0 6px; gap: 5px; background: #f1f1f1; }
.hscroll.small { flex: none; height: 16px; }
.thumb { flex: 1; background: #bbb; border: 1px solid #a8a8a8; }
.hscroll .thumb { height: 12px; margin-right: 15px; }
.hscroll.small .thumb { margin-right: 10px; }
.vscroll { display: flex; flex-direction: column; align-items: center; padding: 7px 0 6px; gap: 4px; background: #f1f1f1; }
.vscroll .thumb { width: 12px; margin-bottom: 17px; }
.corner { background: #fff; }

/* map */
.mapbox { display: flex; flex-direction: column; flex: 1; min-width: 0; border-left: 1px solid #d0d0d0; border-bottom: 1px solid #d0d0d0; }
.maptools { height: 28px; justify-content: space-between; }
.maptools .savebtn { margin-right: -16px; }
.map { position: relative; flex: 1; min-height: 0; overflow: hidden; background: #fbebd7; }
.canvas { width: 100%; height: 100%; }
.f { fill: #add19e; }
.l { fill: #cdebb0; }
.o { fill: #aedfa3; }
.r { fill: #dfdddf; }
.m { fill: #ebdbe8; }
.w { fill: #b5d0d0; }
.f, .l, .o, .r, .w { stroke-linejoin: round; stroke-width: 6; }
.f { stroke: #add19e; }
.l { stroke: #cdebb0; }
.o { stroke: #aedfa3; }
.r { stroke: #dfdddf; }
.g { fill: none; stroke: #bbb9bd; stroke-width: 3; }
.wh { fill: none; stroke: #fff; stroke-width: 7; stroke-linejoin: round; }
.road use { fill: none; stroke-linejoin: round; }
.road .c1 { stroke: #cdd184; stroke-width: 4; }
.road .c2 { stroke: #f6f7b4; stroke-width: 3; }
.road .p1 { stroke: #d88470; stroke-width: 4; }
.road .p2 { stroke: #f8ab94; stroke-width: 3; }
.rail { fill: none; stroke: #777; stroke-width: 1; }
g[transform] > .rail { stroke-width: 4; }
.slide path { stroke: #65554a; stroke-width: 5; stroke-linejoin: round; stroke-linecap: round; }
.slide .pk { fill: #f7b1a3; }
.slide .tn { fill: #d6b583; }
.slide .dk { fill: none; stroke-width: 9; stroke-dasharray: 8 14; }
.place text { font: 10px "DejaVu Sans", sans-serif; text-anchor: middle; fill: #222; stroke: #fff; stroke-opacity: .75; stroke-width: 2px; paint-order: stroke; stroke-linejoin: round; }
.place .in text { fill: #253d60; stroke: #cfe0f2; stroke-opacity: .6; }
.shield rect { fill: #eceed6; stroke: #c5c9a0; }
.shield text { font: 9px "DejaVu Sans", sans-serif; text-anchor: middle; fill: #4b5320; }
.shield rect.dn { fill: #f2d3cc; stroke: #d69a8e; }
.shield text.dn { fill: #7c2f25; }
.zoom { position: absolute; left: 8px; top: 8px; display: grid; gap: 1px; padding: 3px; border-radius: 4px; background: rgba(255, 255, 255, .4); }
.zoom button { display: grid; place-items: center; width: 22px; height: 22px; background: #6a90ab; }
.zoom button:first-child { border-radius: 3px 3px 0 0; }
.zoom button:last-child { border-radius: 0 0 3px 3px; }
.draw { position: absolute; right: 0; top: 8px; display: flex; width: 421px; height: 22px; overflow: hidden; border: 2px solid #aaa; border-right: 0; background: #cbcbcb; }
.set { display: flex; flex: none; padding: 0 4px; border-right: 4px solid #aaa; }
.set.first { padding: 0 3px 0 0; }
.set:last-child { border: 0; }
.set button { display: grid; place-items: center; width: 30px; }
.set svg { width: 16px; height: 16px; }
.layers { position: absolute; right: 0; top: 30px; width: 185px; padding: 5px 0 5px 20px; overflow: hidden; color: #fff; background: #00008b; font: bold 10px/11px "Liberation Sans", Arial, sans-serif; }
.layers strong { display: block; height: 15px; margin-left: -7px; font: bold 10px/14px "Noto Sans", sans-serif; }
.layers label { display: block; }
.layers .nowrap { white-space: nowrap; }
.layers input { appearance: none; width: 12px; height: 12px; margin: 0 1px 1px 0; vertical-align: baseline; border: 1px solid #c4c4c4; border-radius: 2px; background: linear-gradient(#eee, #dcdcdc); }
.layers input:checked { background: url("data:image/svg+xml,%3Csvg xmlns='http://www.w3.org/2000/svg' viewBox='0 0 10 10'%3E%3Cpath d='M1.500 5l2.500 3 4.500-6.500' fill='none' stroke='%23333' stroke-width='2'/%3E%3C/svg%3E") #e4e4e4; }

/* risks */
.risks { display: flex; flex-direction: column; flex: 1; min-height: 0; margin-top: 5px; border-top: 1px solid #d0d0d0; }
.risks > .bar { height: 24px; }
.riskrow { display: flex; gap: 4px; flex: 1; min-height: 0; border-top: 1px solid #d0d0d0; }
.risklist { width: 251px; flex: none; overflow: hidden; background: #fff; }
.c110 { width: 117px; }
.c116 { width: 116px; padding: 0 6px; }
.risklist th:last-child { border-right: 0; }
.heads th { white-space: nowrap; }
.detail { flex: 1; min-width: 0; border-left: 1px solid #d0d0d0; background: #e5e5e5; }
.subtabs { display: flex; align-items: flex-end; gap: 2px; height: 27px; padding: 0 2px 3px; border-bottom: 1px solid #c8c8c8; background: linear-gradient(#dcdcdc, #d2d2d2 23px, #dedede 23px); }
.subtabs button { height: 22px; padding: 0 7px; font: 11px/14px "Noto Sans", sans-serif; color: #858585; border: 1px solid #bdbdbd; border-radius: 3px 3px 0 0; background: linear-gradient(#dfdfdf, #d4d4d4); }
.subtabs .on { padding: 0 10px; font-weight: 700; color: #777; border-top: 2px solid #eaae60; border-bottom-color: #dedede; background: #dedede; }
.dim { background: #dcdcdc; color: #777; border-color: #ccc; }
.dim svg { opacity: .7; }
.dimhead th { color: #777; background: linear-gradient(#dfdfdf, #d7d7d8); border-color: #c8c8c8; }
.dimhead .end { width: 4px; padding: 0; border-right: 0; }

.foot { flex: none; display: flex; justify-content: flex-end; height: 11px; margin: 5px 4px 0 5px; padding: 3px 3px 0 0; overflow: hidden; border: 1px solid #dcdcdc; border-bottom: 0; background: #eee; }
```
